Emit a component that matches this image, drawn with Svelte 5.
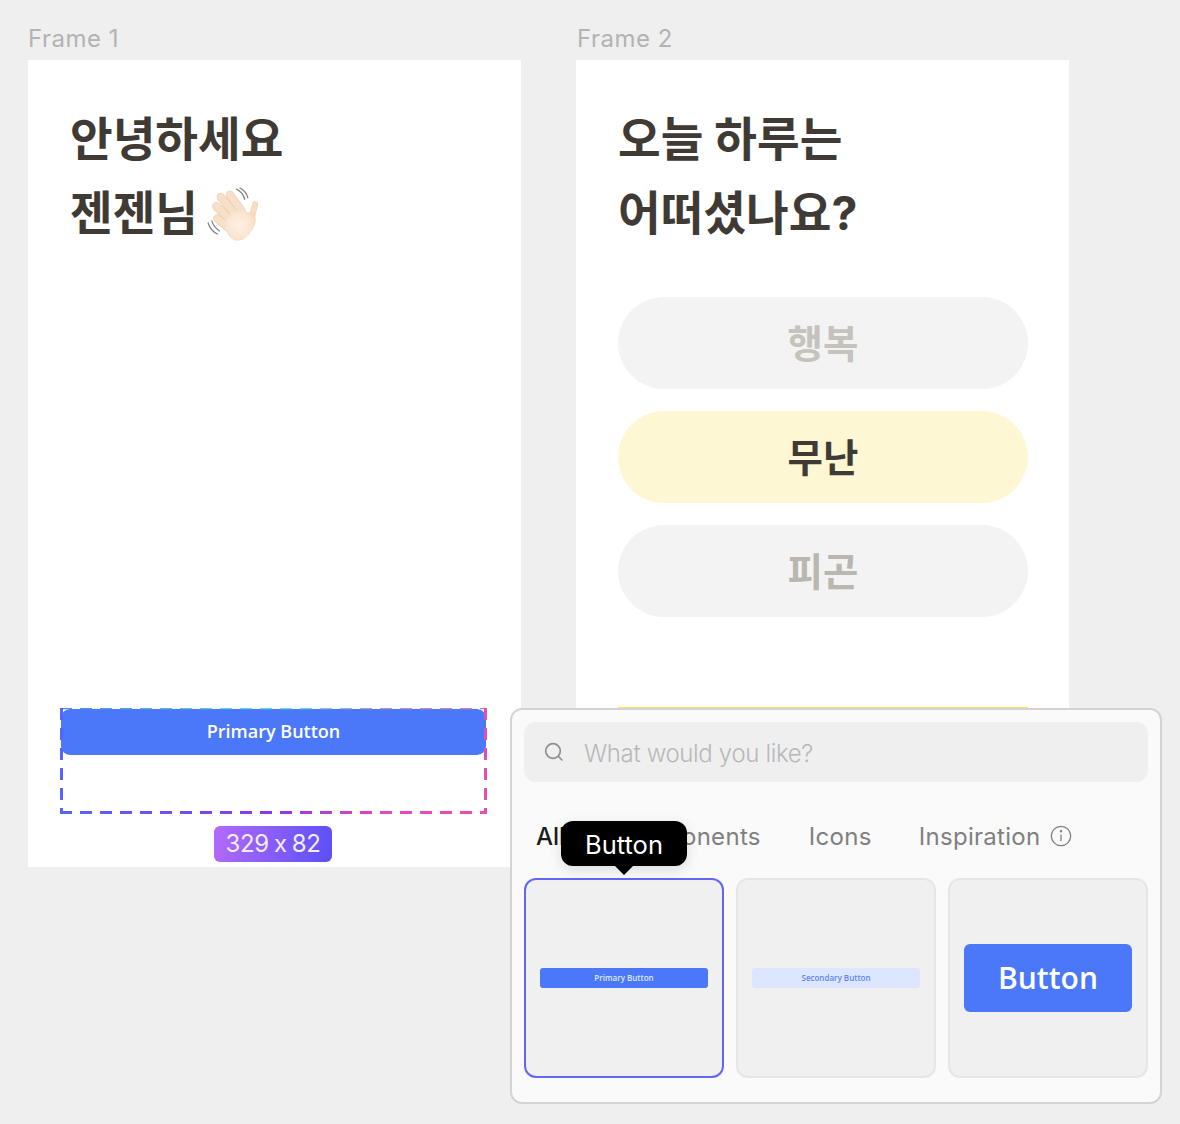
<script>
  const tabs = ['All', 'Components', 'Icons', 'Inspiration'];
  const fingers = [
    'M72 130 L108 160',
    'M69 95 L115 138',
    'M82 68 L125 120',
    'M108 62 L142 108'
  ];
</script>

<div class="canvas">
  <section class="frame-col">
    <div class="label">Frame 1</div>
    <div class="frame first">
      <h1>안녕하세요<br />젠젠님 <svg class="wave" viewBox="39 39 159 159" aria-hidden="true">
        <defs>
          <radialGradient id="palm" gradientUnits="userSpaceOnUse" cx="135" cy="150" r="52">
            <stop offset="0" stop-color="#fdf1e5" />
            <stop offset=".7" stop-color="#fae5d1" />
            <stop offset="1" stop-color="#f5d8bc" />
          </radialGradient>
        </defs>
        <g fill="none" stroke="#808080" stroke-width="3.600" stroke-linecap="round">
          <path d="M127 45 Q146 54 151 75" />
          <path d="M137 42 Q155 51 160 70" />
          <path d="M45 143 Q52 165 72 175" />
          <path d="M56 137 Q61 155 78 166" />
        </g>
        {#each fingers as d}
          <path d={d} stroke="#e8c6a5" stroke-width="24" stroke-linecap="round" fill="none" />
          <path d={d} stroke="#f8dfc8" stroke-width="21" stroke-linecap="round" fill="none" />
        {/each}
        <path d="M170 132 L181 89" stroke="#eccdaf" stroke-width="17" stroke-linecap="round" fill="none" />
        <path d="M170 132 L181 89" stroke="#f6dcc3" stroke-width="14.500" stroke-linecap="round" fill="none" />
        <path fill="url(#palm)" d="M92 150 C88 130 110 112 128 108 C142 104 152 112 162 112 C170 112 180 118 182 126 C186 142 176 164 160 180 C148 194 128 198 116 190 C104 182 96 168 92 150 Z" />
      </svg></h1>
      <div class="selection">
        <button class="primary">Primary Button</button>
        <svg class="dashes" viewBox="0 0 427 106" aria-hidden="true">
          <defs>
            <linearGradient id="dash-b" gradientUnits="userSpaceOnUse" x1="0" x2="427" y1="0" y2="0">
              <stop offset="0" stop-color="#5466fb" />
              <stop offset=".5" stop-color="#8b38e8" />
              <stop offset=".75" stop-color="#e846be" />
              <stop offset="1" stop-color="#f04cb0" />
            </linearGradient>
            <linearGradient id="dash-t" gradientUnits="userSpaceOnUse" x1="0" x2="427" y1="0" y2="0">
              <stop offset="0" stop-color="#4f86f5" />
              <stop offset=".52" stop-color="#5ee7dc" />
              <stop offset=".75" stop-color="#b98fc4" />
              <stop offset="1" stop-color="#cc7fc0" />
            </linearGradient>
          </defs>
          <path class="d thin" stroke="url(#dash-t)" d="M0 .5 H427" />
          <path class="d" stroke="#5466fb" d="M1.500 0 V106" />
          <path class="d" stroke="#e04fb8" d="M425.500 0 V106" />
          <path class="d" stroke="url(#dash-b)" d="M0 104.500 H427" />
        </svg>
      </div>
      <div class="size">329 x 82</div>
    </div>
  </section>

  <section class="frame-col">
    <div class="label shifted">Frame 2</div>
    <div class="frame second">
      <h1>오늘 하루는<br />어떠셨나요?</h1>
      <div class="options">
        <div class="option idle">행복</div>
        <div class="option active">무난</div>
        <div class="option tired">피곤</div>
      </div>
      <div class="next"></div>
    </div>
  </section>

  <aside class="panel">
    <div class="search">
      <svg width="22" height="22" viewBox="0 0 22 22" fill="none" stroke="#8f8f8f" stroke-width="1.700" stroke-linecap="round"><circle cx="10" cy="10" r="7.300" /><path d="M15.500 15.500 L19 19" /></svg>
      <span>What would you like?</span>
    </div>
    <nav class="tabs">
      {#each tabs as t, i}
        <span class="tab" class:on={i === 0}>{t}</span>
      {/each}
      <svg class="info" width="22" height="22" viewBox="0 0 22 22" fill="none" stroke="#808080" stroke-width="1.300"><circle cx="11" cy="11" r="9.700" /><path d="M11 9.500 V16" /><circle cx="11" cy="6.300" r=".6" fill="#808080" /></svg>
    </nav>
    <div class="tiles">
      <div class="tile selected"><div class="mini p">Primary Button</div></div>
      <div class="tile"><div class="mini s">Secondary Button</div></div>
      <div class="tile"><div class="big">Button</div></div>
    </div>
    <div class="tooltip">Button</div>
  </aside>
</div>

<style>
  :global(body) { margin: 0; background: #efefef; }
  .canvas {
    position: relative;
    width: 1180px;
    height: 1124px;
    overflow: hidden;
    display: flex;
    gap: 55px;
    padding: 21px 0 0 28px;
    box-sizing: border-box;
    font-family: Inter, "Noto Sans CJK KR", sans-serif;
  }
  .frame-col { width: 493px; }
  .label { font-size: 24px; line-height: 36px; margin-bottom: 3px; color: #b3b3b3; letter-spacing: .5px; }
  .label.shifted { padding-left: 1px; }
  .frame {
    height: 807px;
    background: #fff;
    box-sizing: border-box;
    padding: 42px 42px 0;
    display: flex;
    flex-direction: column;
  }
  .second { padding-right: 41px; }
  h1 {
    margin: 0;
    font: 700 46.400px/74px Inter, "Noto Sans CJK KR", sans-serif;
    color: #3f3b34;
  }
  .wave { width: 55px; height: 55px; vertical-align: -12px; margin-left: -3px; }
  .selection {
    position: relative;
    margin: 458px 0 0 -10px;
    width: 427px;
    height: 106px;
    box-sizing: border-box;
    padding: 1px 1px 0;
  }
  .primary {
    display: block;
    width: 425px;
    height: 46px;
    border: 0;
    border-radius: 9px;
    background: #4a78f9;
    color: #fff;
    font: 600 18px "Open Sans", sans-serif;
    padding: 0 0 2px;
  }
  .dashes { position: absolute; inset: 0; width: 427px; height: 106px; }
  .d { fill: none; stroke-width: 3; stroke-dasharray: 12 8; }
  .d.thin { stroke-width: 1.500; }
  .size {
    align-self: flex-start;
    margin: 12px 0 0 144px;
    width: 118px;
    height: 36px;
    line-height: 36px;
    text-align: center;
    border-radius: 6px;
    background: linear-gradient(100deg, #b46af9, #5a50f6);
    color: #f3ecff;
    font-size: 24px;
    font-feature-settings: "calt" 0;
    letter-spacing: -.3px;
    word-spacing: -1.500px;
  }
  .options { display: flex; flex-direction: column; gap: 22px; margin-top: 47px; }
  .option {
    height: 92px;
    border-radius: 46px;
    background: #f3f3f3;
    text-align: center;
    font: 700 38.500px/88px "Noto Sans CJK KR", sans-serif;
  }
  .idle { color: #c5c3bc; }
  .active { background: #fdf8d3; color: #3f3b34; }
  .tired { color: #b9b7af; }
  .next { margin-top: 90px; height: 60px; background: #fde14f; }

  .panel {
    position: absolute;
    left: 510px;
    top: 708px;
    width: 652px;
    height: 396px;
    box-sizing: border-box;
    padding: 12px;
    background: #fafafa;
    border: 2px solid #d4d4d4;
    border-radius: 12px;
  }
  .search {
    height: 60px;
    background: #efefef;
    border-radius: 12px;
    display: flex;
    align-items: center;
    gap: 19px;
    padding-left: 19px;
    color: #b8b8b8;
    font-size: 24px;
    font-weight: 300;
    letter-spacing: -.35px;
  }
  .search span { padding-top: 2px; }
  .tabs {
    display: flex;
    align-items: center;
    gap: 48px;
    height: 96px;
    box-sizing: border-box;
    padding: 12px 0 0 12px;
    font-size: 24px;
    letter-spacing: .3px;
    color: #808080;
  }
  .tab:last-of-type { margin-left: -1px; }
  .tab.on { color: #1c1c1c; font-weight: 500; letter-spacing: 0; }
  .info { margin-left: -39px; }
  .tiles { display: flex; gap: 12px; }
  .tile {
    width: 200px;
    height: 200px;
    box-sizing: border-box;
    background: #f0f0f0;
    border: 2px solid #e6e6e6;
    border-radius: 12px;
    display: flex;
    align-items: center;
    justify-content: center;
  }
  .tile.selected { border-color: #6366f6; }
  .mini {
    width: 168px;
    height: 20px;
    line-height: 20px;
    border-radius: 3px;
    text-align: center;
    font: 600 8px/20px "Open Sans", sans-serif;
  }
  .mini.p { background: #4a78f9; color: #dfe8ff; }
  .mini.s { background: #dce7ff; color: #5f83f5; }
  .big {
    width: 168px;
    height: 68px;
    border-radius: 6px;
    background: #4a78f9;
    color: #fff;
    text-align: center;
    font: 600 30px/68px "Open Sans", sans-serif;
  }
  .tooltip {
    position: absolute;
    left: 49px;
    top: 111px;
    width: 126px;
    height: 45px;
    border-radius: 12px;
    background: #000;
    color: #fff;
    font-size: 25.500px;
    line-height: 47px;
    text-align: center;
    box-shadow: 0 4px 14px rgba(0, 0, 0, .12);
  }
  .tooltip::after {
    content: '';
    position: absolute;
    left: 50%;
    bottom: -9px;
    margin-left: -10px;
    border: 10px solid transparent;
    border-top-color: #000;
    border-bottom: 0;
  }
</style>
